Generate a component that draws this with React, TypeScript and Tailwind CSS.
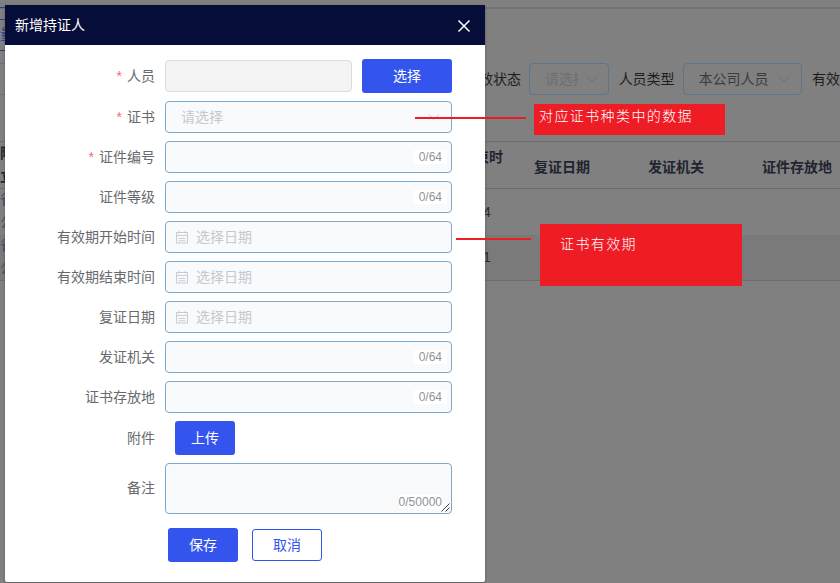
const cjk = "font-['Liberation_Sans','Noto_Sans_CJK_SC',sans-serif]";

function Req() {
  return <span className="mr-[5px] text-[14px] text-[#f56c6c]">*</span>;
}

function Row({ label, req, mb = "mb-[8px]", children }: { label: string; req?: boolean; mb?: string; children: React.ReactNode }) {
  return (
    <div className={`flex items-center ${mb}`}>
      <label className="w-[150px] shrink-0 text-right text-[14px] text-[#686a6e]">
        {req && <Req />}
        {label}
      </label>
      <div className="ml-[10px] flex items-center">{children}</div>
    </div>
  );
}

const box = "relative flex h-[32px] w-[287px] items-center rounded-[4px] border border-[#7fa9cb] bg-[#f9fafc]";

function TextBox() {
  return (
    <div className={box}>
      <span className="absolute right-[4px] top-[8px] bg-white px-[5px] text-[12px] leading-[14px] text-[#909399]">0/64</span>
    </div>
  );
}

function DateBox() {
  return (
    <div className={box}>
      <svg width="13" height="13" viewBox="0 0 13 13" fill="none" stroke="#c9ccd4" strokeWidth="1" className="ml-[10px]">
        <rect x="0.5" y="1.5" width="11" height="10.5" />
        <path d="M0.5 4.5H11.5M3 0V2.5M9 0V2.5M2.5 7.5H9.5M2.5 9.8H9.5" />
      </svg>
      <span className="ml-[7px] text-[14px] text-[#c5c8ce]">选择日期</span>
    </div>
  );
}

function Chevron({ color }: { color: string }) {
  return (
    <svg width="14" height="14" viewBox="0 0 14 14" fill="none" stroke={color} strokeWidth="1">
      <path d="M2 4.5L7 9.5L12 4.5" />
    </svg>
  );
}

function EdgeMark({ y, color }: { y: string; color: string }) {
  return <div className={`absolute left-0 h-px w-[5px] ${y} ${color}`} />;
}

function EdgeChar({ y, bold, color, children }: { y: string; bold?: boolean; color: string; children: React.ReactNode }) {
  return <span className={`absolute left-0 text-[14px] leading-[14px] ${y} ${color} ${bold ? "font-bold" : ""}`}>{children}</span>;
}

export default function App() {
  return (
    <div className={`relative h-[583px] w-[840px] overflow-hidden bg-[#808080] ${cjk}`}>
      {/* dimmed page behind */}
      <div className="h-[9px] border-b-2 border-[#737373]" />
      <div className="ml-[479px] mt-[54px] flex h-[32px] items-center whitespace-nowrap text-[14px] text-[#1d1d1f]">
        <span className="w-[42px]">效状态</span>
        <div className="ml-[8px] flex h-[32px] w-[80px] items-center justify-between rounded-[4px] border border-[#5e7489] pl-[15px] pr-[9px] text-[#6f6f6f]">
          <span className="w-[33px] overflow-hidden">请选择</span>
          <Chevron color="#6f6f6f" />
        </div>
        <span className="ml-[10px]">人员类型</span>
        <div className="ml-[8px] flex h-[32px] w-[120px] items-center justify-between rounded-[4px] border border-[#5e7489] pl-[15px] pr-[10px] text-[#3c3c3c]">
          <span>本公司人员</span>
          <Chevron color="#6f6f6f" />
        </div>
        <span className="ml-[10px]">有效</span>
      </div>
      <div className="mt-[46px] flex h-[48px] border-y border-[#6e6e6e] text-[14px] font-bold text-[#1f2430]">
        <span className="ml-[475px] mt-[5px] w-[59px]">束时</span>
        <span className="mt-[15px] w-[114px]">复证日期</span>
        <span className="mt-[15px] w-[114px]">发证机关</span>
        <span className="mt-[15px] whitespace-nowrap">证件存放地</span>
      </div>
      <div className="flex h-[46px] items-center pl-[483px] text-[14px] text-[#2b2b2b]">4</div>
      <div className="flex h-[46px] items-center border-b border-[#6e6e6e] bg-[#7a7a7a] pl-[483px] text-[14px] text-[#2b2b2b]">1</div>

      {/* sliver of the page left of the dialog */}
      <EdgeMark y="top-[7px]" color="bg-[#2b3f9a]" />
      <EdgeMark y="top-[19px]" color="bg-[#2b3f9a]" />
      <EdgeMark y="top-[50px]" color="bg-[#2b3f9a]" />
      <EdgeMark y="top-[63px]" color="bg-[#5e7489]" />
      <EdgeMark y="top-[94px]" color="bg-[#5e7489]" />
      <EdgeChar y="top-[27px]" color="text-[#2b3f9a]">量</EdgeChar>
      <EdgeChar y="top-[146px]" bold color="text-[#1f2430]">附</EdgeChar>
      <EdgeChar y="top-[169px]" bold color="text-[#1f2430]">立</EdgeChar>
      <EdgeChar y="top-[192px]" color="text-[#3b4a6b]">省</EdgeChar>
      <EdgeChar y="top-[215px]" color="text-[#555555]">公</EdgeChar>
      <EdgeChar y="top-[238px]" color="text-[#3b4a6b]">省</EdgeChar>
      <EdgeChar y="top-[261px]" color="text-[#555555]">公</EdgeChar>

      {/* dialog */}
      <div className="absolute left-[5px] top-[5px] h-[577px] w-[480px] overflow-hidden rounded-b-[2px] bg-white shadow-[0_1px_3px_rgba(0,0,0,0.3)]">
        <div className="flex h-[40px] items-center justify-between bg-[#060d38] pl-[10px] pr-[14px] text-[14px] text-white">
          <span>新增持证人</span>
          <svg width="14" height="14" viewBox="0 0 14 14" fill="none" stroke="white" strokeWidth="1.5" className="mt-[2px]">
            <path d="M1.5 1.5L12.5 12.5M12.5 1.5L1.5 12.5" />
          </svg>
        </div>
        <div className="pt-[14px]">
          <Row label="人员" req>
            <div className="h-[32px] w-[187px] rounded-[4px] border border-[#dcdcdc] bg-[#f4f4f4]" />
            <button className="ml-[10px] h-[34px] w-[90px] rounded-[3px] bg-[#3355ee] text-[14px] text-white">选择</button>
          </Row>
          <Row label="证书" req>
            <div className={`${box} justify-between pl-[15px] pr-[10px]`}>
              <span className="text-[14px] text-[#c5c8ce]">请选择</span>
              <Chevron color="#c5c8ce" />
            </div>
          </Row>
          <Row label="证件编号" req><TextBox /></Row>
          <Row label="证件等级"><TextBox /></Row>
          <Row label="有效期开始时间"><DateBox /></Row>
          <Row label="有效期结束时间"><DateBox /></Row>
          <Row label="复证日期"><DateBox /></Row>
          <Row label="发证机关"><TextBox /></Row>
          <Row label="证书存放地"><TextBox /></Row>
          <Row label="附件">
            <button className="ml-[10px] h-[34px] w-[60px] rounded-[3px] bg-[#3355ee] text-[14px] text-white">上传</button>
          </Row>
          <Row label="备注" mb="mb-[14px]">
            <div className="relative h-[51px] w-[287px] rounded-[4px] border border-[#7fa9cb] bg-[#f9fafc]">
              <span className="absolute bottom-[4px] right-[9px] bg-white text-[12px] leading-[14px] text-[#909399]">0/50000</span>
              <svg width="9" height="9" viewBox="0 0 9 9" stroke="#444" strokeWidth="1" className="absolute bottom-[1px] right-[1px]">
                <path d="M0.5 8.5L8.5 0.5M4.5 8.5L8.5 4.5" />
              </svg>
            </div>
          </Row>
          <div className="ml-[163px] flex items-center gap-[14px]">
            <button className="h-[34px] w-[70px] rounded-[3px] bg-[#3355ee] text-[14px] text-white">保存</button>
            <button className="h-[32px] w-[70px] rounded-[3px] border border-[#3355ee] bg-white text-[14px] text-[#3355ee]">取消</button>
          </div>
        </div>
      </div>

      {/* annotations */}
      <div className="absolute left-[415px] top-[117px] h-[2px] w-[111px] bg-[#ee1c25]" />
      <div className="absolute left-[534px] top-[104px] h-[31px] w-[191px] bg-[#ee1c25] pl-[5px] pt-[2px] text-[14px] font-light tracking-[1.4px] text-white">对应证书种类中的数据</div>
      <div className="absolute left-[456px] top-[238px] h-[2px] w-[75px] bg-[#ee1c25]" />
      <div className="absolute left-[540px] top-[224px] h-[62px] w-[202px] bg-[#ee1c25] pl-[20px] pt-[10px] text-[14px] font-light tracking-[1.4px] text-white">证书有效期</div>
    </div>
  );
}
